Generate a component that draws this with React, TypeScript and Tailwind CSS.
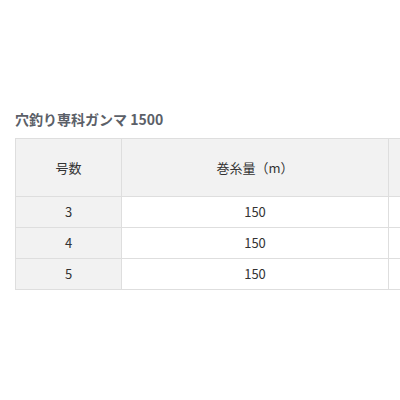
const rows = [
  { no: '3', len: '150' },
  { no: '4', len: '150' },
  { no: '5', len: '150' },
];

export default function App() {
  return (
    <div className="w-[400px] h-[400px] overflow-hidden bg-white font-['Noto_Sans_CJK_JP','Noto_Sans',sans-serif] text-[#333]">
      <div className="pt-[108px] pl-[15px]">
        <h2 className="text-[14px] leading-[22px] font-bold text-[#5b6068]">穴釣り専科ガンマ 1500</h2>
        <div className="mt-[8px] w-[420px] grid grid-cols-[106px_267px_47px] border-t border-l border-[#dedede] text-[13px]">
          <div className="h-[58px] flex items-center justify-center bg-[#f2f2f2] border-r border-b border-[#dedede]">号数</div>
          <div className="h-[58px] flex items-center justify-center bg-[#f2f2f2] border-r border-b border-[#dedede]">巻糸量（m）</div>
          <div className="h-[58px] bg-[#f2f2f2] border-r border-b border-[#dedede]" />
          {rows.map((r) => (
            <div key={r.no} className="contents">
              <div className="h-[31px] flex items-center justify-center bg-[#f2f2f2] border-r border-b border-[#dedede]">{r.no}</div>
              <div className="h-[31px] flex items-center justify-center bg-white border-r border-b border-[#dedede]">{r.len}</div>
              <div className="h-[31px] bg-white border-r border-b border-[#dedede]" />
            </div>
          ))}
        </div>
      </div>
    </div>
  );
}
